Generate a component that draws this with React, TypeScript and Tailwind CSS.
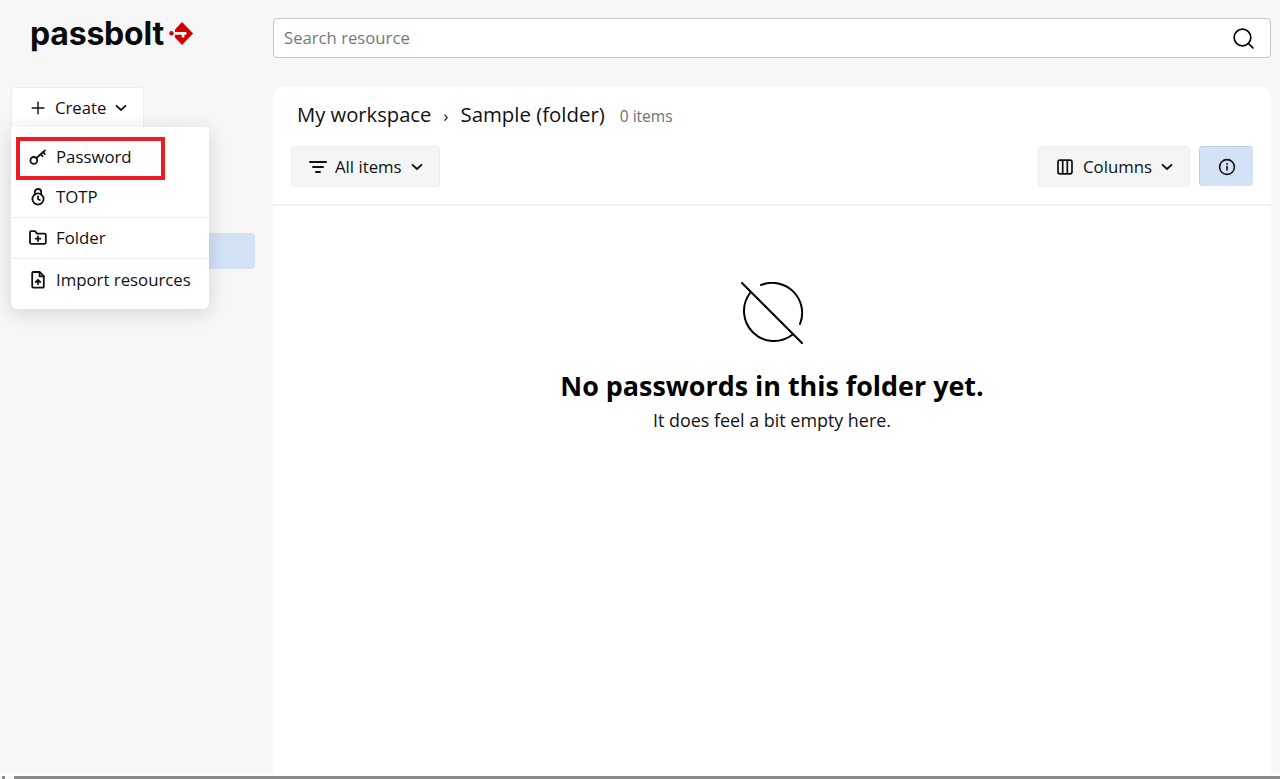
import { Plus, Search } from "lucide-react";

const font = "font-['Open_Sans',sans-serif]";

function Chevron() {
	return (
		<svg width="12" height="8" viewBox="0 0 12 8" fill="none" stroke="#111" strokeWidth="1.8" strokeLinecap="round" strokeLinejoin="round">
			<path d="M1.5 1.8 L6 6 L10.5 1.8" />
		</svg>
	);
}

function KeyIcon() {
	return (
		<svg width="18" height="18" viewBox="0 0 18 18" fill="none" stroke="#111" strokeWidth="1.8" strokeLinecap="round">
			<circle cx="4.8" cy="12.4" r="3.4" />
			<path d="M7.4 10 L16 2.4" />
			<path d="M11.6 6.4 L13.6 8.2" />
			<path d="M14 4.2 L15.8 6" />
		</svg>
	);
}

function TotpIcon() {
	return (
		<svg width="18" height="18" viewBox="0 0 18 18" fill="none" stroke="#111" strokeWidth="1.8" strokeLinecap="round" strokeLinejoin="round">
			<path d="M5.8 6.6 V4.2 a3.2 3.2 0 0 1 6.4 0 V6.6" />
			<circle cx="9" cy="11" r="5.6" />
			<path d="M9 8.4 V11 L10.8 12" />
		</svg>
	);
}

function FolderPlusIcon() {
	return (
		<svg width="18" height="18" viewBox="0 0 18 18" fill="none" stroke="#111" strokeWidth="1.8" strokeLinecap="round" strokeLinejoin="round">
			<path d="M1 3.4 a1.2 1.2 0 0 1 1.2 -1.2 H6.2 L8 4.6 H15.6 a1.2 1.2 0 0 1 1.2 1.2 V13.6 a1.2 1.2 0 0 1 -1.2 1.2 H2.2 a1.2 1.2 0 0 1 -1.2 -1.2 Z" />
			<path d="M9 7.4 V12 M6.7 9.7 H11.3" />
		</svg>
	);
}

function FileUpIcon() {
	return (
		<svg width="18" height="18" viewBox="0 0 18 18" fill="none" stroke="#111" strokeWidth="1.8" strokeLinecap="round" strokeLinejoin="round">
			<path d="M10.8 1 H4.4 a1.2 1.2 0 0 0 -1.2 1.2 V15.4 a1.2 1.2 0 0 0 1.2 1.2 H13.6 a1.2 1.2 0 0 0 1.2 -1.2 V5.2 Z" />
			<path d="M10.6 1.2 V5.4 H14.6" />
			<path d="M9 13.2 V9 M6.8 11 L9 8.8 L11.2 11" />
		</svg>
	);
}

function FilterIcon() {
	return (
		<svg width="18" height="14" viewBox="0 0 18 14" fill="none" stroke="#111" strokeWidth="2" strokeLinecap="round">
			<path d="M1 2 H17 M4 7 H14 M7 12 H11" />
		</svg>
	);
}

function ColumnsIcon() {
	return (
		<svg width="16" height="16" viewBox="0 0 16 16" fill="none" stroke="#111" strokeWidth="1.7" strokeLinejoin="round">
			<rect x="1" y="1.2" width="14" height="13.6" rx="2" />
			<path d="M5.7 1.2 V14.8 M10.3 1.2 V14.8" />
		</svg>
	);
}

function InfoIcon() {
	return (
		<svg width="18" height="18" viewBox="0 0 18 18" fill="none" stroke="#111" strokeWidth="1.6" strokeLinecap="round">
			<circle cx="9" cy="9" r="7.4" />
			<path d="M9 8.6 V12" />
			<circle cx="9" cy="5.9" r="0.5" fill="#111" strokeWidth="0.8" />
		</svg>
	);
}

function EmptyIcon() {
	return (
		<svg width="64" height="64" viewBox="0 0 64 64" fill="none" stroke="#000" strokeWidth="2" strokeLinecap="round">
			<path d="M2 1 L62 61" />
			<path d="M21 3 A30 30 0 0 1 60 42" />
			<path d="M10 11 A30 30 0 0 0 52 53" />
		</svg>
	);
}

function LogoMark() {
	return (
		<svg width="25" height="24" viewBox="0 0 25 24">
			<path d="M13 0 L24.2 11.5 L13 23 L6 15.5 L6 7.5 Z" fill="#d40101" />
			<path d="M3 10 H17.4 V12.8 H15.4 V15.4 H12.8 V12.8 H3 Z" fill="#f7f7f7" />
			<circle cx="2.5" cy="11.3" r="2.2" fill="#d40101" />
		</svg>
	);
}

const menuItems = [
	{ label: "Password", icon: <KeyIcon />, className: "h-[41px]" },
	{ label: "TOTP", icon: <TotpIcon />, className: "h-[41px] border-b border-[#ececec]" },
	{ label: "Folder", icon: <FolderPlusIcon />, className: "h-[41px] border-b border-[#ececec]" },
	{ label: "Import resources", icon: <FileUpIcon />, className: "h-[42px]" },
];

export default function App() {
	return (
		<div className={`${font} relative h-[779px] w-[1280px] overflow-hidden bg-[#f7f7f7] text-[#111]`}>
			{/* Header */}
			<div className="flex h-[87px] pt-[18px]">
				<div className="flex w-[273px] pl-[30px]">
					<div className="flex h-[32px] items-center gap-[5px]">
						<span className="font-['Inter',sans-serif] text-[32px] leading-none font-bold tracking-[-0.2px] text-[#0b0b0b]">passbolt</span>
						<LogoMark />
					</div>
				</div>
				<div className="flex h-[40px] w-[998px] items-center justify-between rounded-[4px] border border-[#c4c4c4] bg-white pr-[14px] pl-[10px]">
					<span className="text-[16.7px] text-[#777]">Search resource</span>
					<Search size={25} strokeWidth={1.6} className="text-black" />
				</div>
			</div>

			{/* Body */}
			<div className="flex h-[686px]">
				<div className="w-[273px] pt-[146px]">
					<div className="ml-[180px] h-[36px] w-[75px] rounded-[4px] bg-[#d3e2f6]" />
				</div>
				<div className="flex h-full w-[998px] flex-col rounded-t-[10px] bg-white">
					<div className="flex items-baseline pt-[11px] pl-[24px]">
						<span className="text-[20.2px] leading-[32px]">My workspace</span>
						<span className="mx-[12px] text-[17px]">›</span>
						<span className="text-[20.4px] leading-[32px]">Sample (folder)</span>
						<span className="ml-[15px] text-[15.5px] text-[#6f6f6f]">0 items</span>
					</div>
					<div className="flex items-start justify-between pt-[16px] pr-[18px] pl-[18px]">
						<div className="flex h-[41px] w-[149px] items-center rounded-[4px] border border-[#ececec] bg-[#f5f5f5] pl-[17px]">
							<FilterIcon />
							<span className="ml-[8px] text-[16.8px]">All items</span>
							<span className="ml-[9px]"><Chevron /></span>
						</div>
						<div className="flex gap-[9px]">
							<div className="flex h-[41px] w-[152px] items-center rounded-[4px] border border-[#ececec] bg-[#f5f5f5] pl-[18px]">
								<ColumnsIcon />
								<span className="ml-[10px] text-[16.8px]">Columns</span>
								<span className="ml-[9px]"><Chevron /></span>
							</div>
							<div className="flex h-[40px] w-[54px] items-center justify-center rounded-[4px] border-t border-l border-[#bccfe8] bg-[#d3e2f6]">
								<InfoIcon />
							</div>
						</div>
					</div>
					<div className="mt-[17px] border-t-2 border-[#f2f2f2]" />
					<div className="flex flex-col items-center pt-[76px]">
						<EmptyIcon />
						<div className="mt-[22px] text-[26.9px] leading-[36px] font-bold text-black">No passwords in this folder yet.</div>
						<div className="mt-[4px] text-[17.9px] leading-[24px]">It does feel a bit empty here.</div>
					</div>
				</div>
			</div>

			{/* Bottom edge of the captured window */}
			<div className="absolute right-0 bottom-[3px] left-0 h-[3px] bg-white" />
			<div className="absolute right-0 bottom-0 left-[14px] h-[3px] bg-[#8a8a8a]" />
			<div className="absolute bottom-0 left-[2px] h-[3px] w-[3px] bg-[#8a8a8a]" />

			{/* Create dropdown */}
			<div className="absolute top-[87px] left-[11px] flex h-[41px] w-[133px] items-center rounded-t-[4px] border border-b-0 border-[#eeeeee] bg-white pl-[16px]">
				<Plus size={20} strokeWidth={1.7} />
				<span className="ml-[7px] text-[16.7px]">Create</span>
				<span className="ml-[9px]"><Chevron /></span>
			</div>
			<div className="absolute top-[127px] left-[11px] h-[182px] w-[198px] rounded-b-[6px] rounded-tr-[4px] bg-white pt-[9px] shadow-[0_4px_20px_rgba(0,0,0,0.15)]">
				{menuItems.map((item) => (
					<div key={item.label} className={`flex items-center pl-[18px] ${item.className}`}>
						{item.icon}
						<span className="ml-[9px] text-[16.8px]">{item.label}</span>
					</div>
				))}
			</div>

			{/* Red highlight round the Password entry */}
			<div className="absolute top-[137px] left-[16px] h-[43px] w-[149px] border-[4px] border-[#ed1c24]" />
		</div>
	);
}
